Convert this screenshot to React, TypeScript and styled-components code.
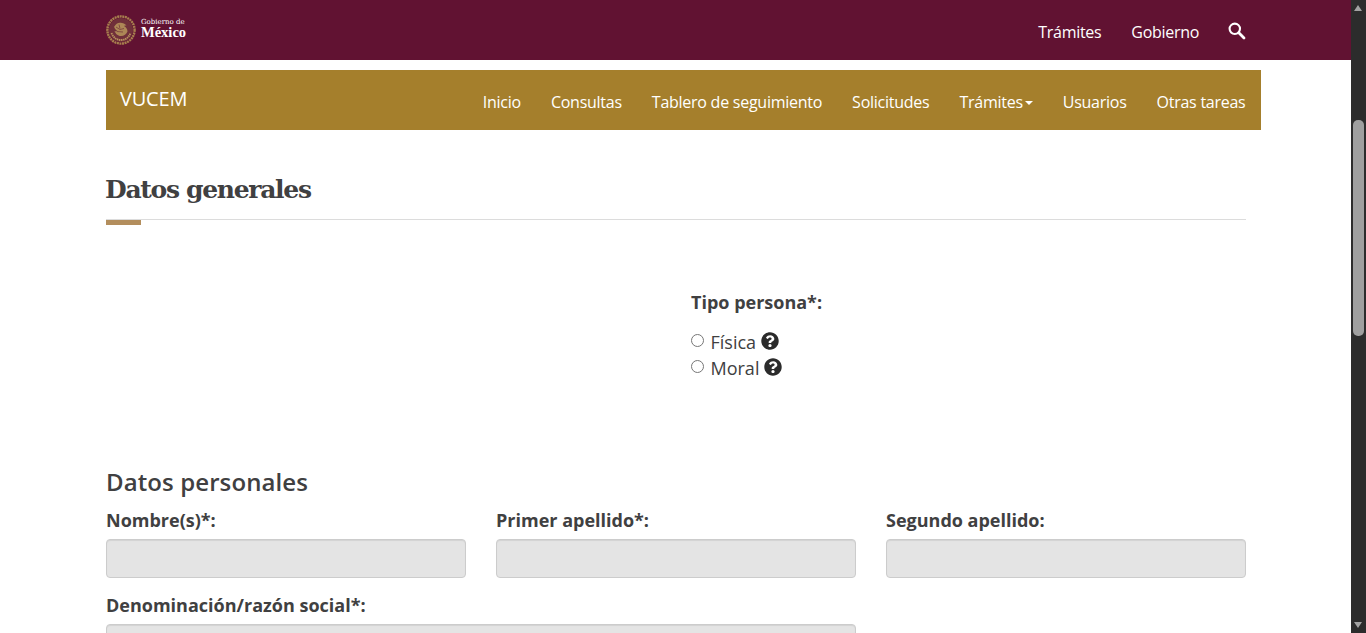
import React from "react";
import styled, { createGlobalStyle } from "styled-components";
import { FaQuestionCircle } from "react-icons/fa";

const Global = createGlobalStyle`
  html, body { margin: 0; padding: 0; height: 633px; overflow: hidden; background: #fff; }
  body { font-family: "Open Sans", "Liberation Sans", sans-serif; color: #333; }
  #root { height: 633px; }
`;

const Shell = styled.div`
  display: flex;
  height: 633px;
  overflow: hidden;
`;

const Page = styled.div`
  flex: 1;
  min-width: 0;
  overflow: hidden;
`;

const TopBar = styled.header`
  height: 60px;
  background: #611232;
  display: flex;
  align-items: center;
  justify-content: space-between;
  padding: 0 105px 0 106px;
`;

const Brand = styled.div`
  display: flex;
  align-items: center;
  gap: 5px;
  margin-top: -1px;
`;

const BrandText = styled.div`
  display: flex;
  flex-direction: column;
  color: #fff;
  margin-top: -1px;
`;

const BrandSmall = styled.span`
  font-family: "DejaVu Serif", "Liberation Serif", serif;
  font-size: 7px;
  line-height: 7px;
`;

const BrandBig = styled.span`
  font-family: "Liberation Serif", "DejaVu Serif", serif;
  font-size: 14.5px;
  line-height: 13px;
  font-weight: 700;
`;

const TopLinks = styled.nav`
  display: flex;
  align-items: center;
  gap: 30px;
  color: #fff;
  font-size: 16px;
  line-height: 22px;
  letter-spacing: -0.3px;
`;

const TopLink = styled.span`
  display: block;
  margin-top: 4px;
`;

const SearchButton = styled.span`
  display: flex;
  margin: 1px 0 0 -1px;
`;

const SubBar = styled.nav`
  width: 1155px;
  height: 60px;
  margin: 10px 0 0 106px;
  background: #a57f2c;
  color: #fff;
  display: flex;
  align-items: center;
  justify-content: space-between;
  padding: 0 15.5px 0 14px;
  box-sizing: border-box;
`;

const SubBrand = styled.span`
  font-size: 20px;
  line-height: 24px;
  letter-spacing: -0.2px;
  margin-top: -3px;
`;

const SubLinks = styled.div`
  display: flex;
  gap: 30px;
  font-size: 16px;
  line-height: 22px;
  letter-spacing: -0.255px;
  margin-top: 3px;
`;

const SubLink = styled.span`
  display: flex;
  align-items: center;
`;

const Caret = styled.i`
  display: block;
  width: 0;
  height: 0;
  margin: 2px 0 0 2px;
  border-top: 4px solid #fff;
  border-left: 4px solid transparent;
  border-right: 4px solid transparent;
`;

const Content = styled.main`
  width: 1140px;
  margin-left: 106px;
`;

const Title = styled.h1`
  margin: 42px 0 0 -1px;
  font-family: "DejaVu Serif", "Liberation Serif", serif;
  font-size: 25px;
  line-height: 36px;
  font-weight: 700;
  color: #404041;
  letter-spacing: -1.3px;
`;

const Rule = styled.div`
  height: 1px;
  margin-top: 11px;
  background: #dcdcdc;
`;

const RuleAccent = styled.div`
  width: 35px;
  height: 5px;
  background: #b38e5d;
`;

const PersonBlock = styled.section`
  margin: 66px 0 0 585px;
`;

const FieldLabel = styled.label`
  display: block;
  font-size: 18px;
  line-height: 22px;
  font-weight: 700;
  color: #404041;
`;

const RadioGroup = styled.div`
  margin-top: 18px;
  display: flex;
  flex-direction: column;
  gap: 4px;
`;

const RadioRow = styled.div`
  display: flex;
  align-items: center;
  height: 22px;
  font-size: 18px;
  color: #404041;
`;

const RadioInput = styled.input`
  width: 13px;
  height: 13px;
  margin: -4px 6.5px 0 0;
  accent-color: #666;
`;

const Help = styled.span`
  display: flex;
  margin: -2px 0 0 5px;
  font-size: 18px;
  color: #2b2b2b;
`;

const SectionTitle = styled.h2`
  margin: 86px 0 0;
  font-size: 24px;
  line-height: 33px;
  font-weight: 600;
  color: #404041;
  letter-spacing: 0.1px;
`;

const FormGrid = styled.div`
  display: grid;
  grid-template-columns: repeat(3, 360px);
  column-gap: 30px;
  row-gap: 16px;
  margin-top: 11px;
`;

const Field = styled.div<{ $span?: number }>`
  grid-column: span ${(p) => p.$span ?? 1};
`;

const TextBox = styled.div`
  height: 39px;
  margin-top: 8px;
  box-sizing: border-box;
  background: #e4e4e4;
  border: 1px solid #ccc;
  border-radius: 4px;
  box-shadow: inset 0 1px 1px rgba(0, 0, 0, 0.075);
`;

const Scrollbar = styled.aside`
  position: relative;
  flex: 0 0 15px;
  background: #2c2c2c;
`;

const Thumb = styled.div`
  position: absolute;
  left: 2px;
  top: 120px;
  width: 11px;
  height: 216px;
  border-radius: 5px;
  background: #9f9f9f;
`;

const ArrowUp = styled.div`
  position: absolute;
  left: 3px;
  top: 5px;
  border-bottom: 6px solid #a3a3a3;
  border-left: 4.5px solid transparent;
  border-right: 4.5px solid transparent;
`;

const ArrowDown = styled.div`
  position: absolute;
  left: 3px;
  bottom: 5px;
  border-top: 6px solid #a3a3a3;
  border-left: 4.5px solid transparent;
  border-right: 4.5px solid transparent;
`;

const Seal = () => (
  <svg width="30" height="30" viewBox="0 0 30 30" aria-hidden="true">
    <circle cx="15" cy="15" r="13.6" fill="none" stroke="#a77f4e" strokeWidth="2.4" strokeDasharray="2 0.6" />
    <circle cx="15" cy="15" r="12" fill="#70303a" />
    <path d="M8 12c2-4 5-5 8-4 1.500.4 3 .8 4.500 2.500-1 0-2 .1-2.500.5 1.500 1 3.500 2.500 3.500 5.500-1 2.500-3.500 4.500-6.500 4.500-3.500 0-5.500-2.500-6.500-5 1 .4 2 .4 3 0-1.500-1-3-2.500-3.500-4.500z" fill="#ad8756" />
    <path d="M5.500 18c2 5 5.500 7 9.500 7s7.500-2 9.500-7" fill="none" stroke="#b8925f" strokeWidth="1.800" strokeDasharray="1.500 .6" />
    <path d="M10 12l4 2.500 4-1M11 16.500l6 .5M13 9.500l1 4" stroke="#70303a" strokeWidth="0.700" fill="none" />
  </svg>
);

const SearchGlyph = () => (
  <svg width="18" height="18" viewBox="0 0 18 18" aria-hidden="true">
    <circle cx="6.800" cy="6.800" r="5.200" fill="none" stroke="#fff" strokeWidth="2.100" />
    <path d="M10.800 10.800L16 16" stroke="#fff" strokeWidth="2.800" strokeLinecap="round" />
  </svg>
);

const navItems = ["Inicio", "Consultas", "Tablero de seguimiento", "Solicitudes"];

export default function App() {
  return (
    <Shell>
      <Global />
      <Page>
        <TopBar>
          <Brand>
            <Seal />
            <BrandText>
              <BrandSmall>Gobierno de</BrandSmall>
              <BrandBig>México</BrandBig>
            </BrandText>
          </Brand>
          <TopLinks>
            <TopLink>Trámites</TopLink>
            <TopLink>Gobierno</TopLink>
            <SearchButton>
              <SearchGlyph />
            </SearchButton>
          </TopLinks>
        </TopBar>
        <SubBar>
          <SubBrand>VUCEM</SubBrand>
          <SubLinks>
            {navItems.map((n) => (
              <SubLink key={n}>{n}</SubLink>
            ))}
            <SubLink>
              Trámites
              <Caret />
            </SubLink>
            <SubLink>Usuarios</SubLink>
            <SubLink>Otras tareas</SubLink>
          </SubLinks>
        </SubBar>
        <Content>
          <Title>Datos generales</Title>
          <Rule />
          <RuleAccent />
          <PersonBlock>
            <FieldLabel>Tipo persona*:</FieldLabel>
            <RadioGroup>
              <RadioRow>
                <RadioInput type="radio" name="tipo" />
                Física
                <Help>
                  <FaQuestionCircle />
                </Help>
              </RadioRow>
              <RadioRow>
                <RadioInput type="radio" name="tipo" />
                Moral
                <Help>
                  <FaQuestionCircle />
                </Help>
              </RadioRow>
            </RadioGroup>
          </PersonBlock>
          <SectionTitle>Datos personales</SectionTitle>
          <FormGrid>
            <Field>
              <FieldLabel>Nombre(s)*:</FieldLabel>
              <TextBox />
            </Field>
            <Field>
              <FieldLabel>Primer apellido*:</FieldLabel>
              <TextBox />
            </Field>
            <Field>
              <FieldLabel>Segundo apellido:</FieldLabel>
              <TextBox />
            </Field>
            <Field $span={2}>
              <FieldLabel>Denominación/razón social*:</FieldLabel>
              <TextBox />
            </Field>
          </FormGrid>
        </Content>
      </Page>
      <Scrollbar>
        <ArrowUp />
        <Thumb />
        <ArrowDown />
      </Scrollbar>
    </Shell>
  );
}
